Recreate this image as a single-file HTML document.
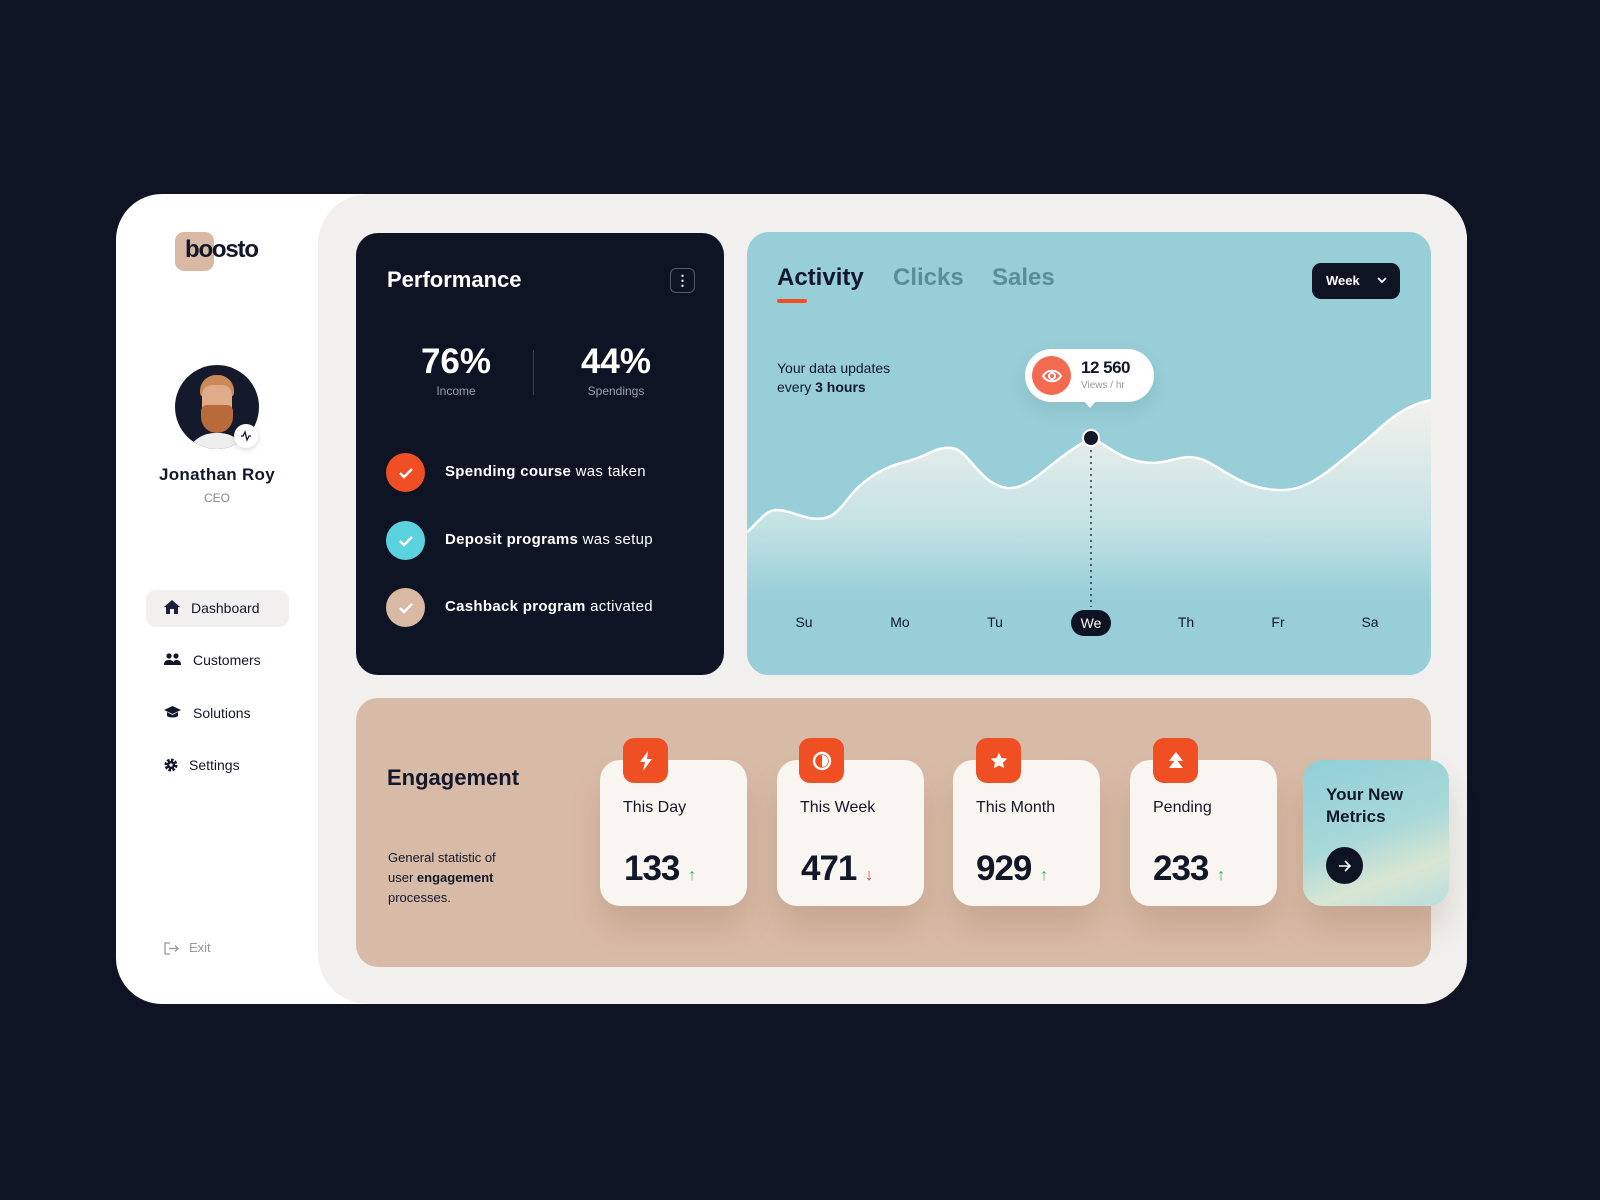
<!DOCTYPE html>
<html><head><meta charset="utf-8"><style>
*{box-sizing:border-box;margin:0;padding:0}
body{width:1600px;height:1200px;background:#0f1424;font-family:"Liberation Sans",sans-serif;position:relative;overflow:hidden;color:#12172a}
.abs{position:absolute}
.outer{left:116px;top:194px;width:1351px;height:810px;background:#fff;border-radius:46px;overflow:hidden}
.content{left:202px;top:0;width:1149px;height:810px;background:#f1f0ee;border-radius:50px 0 0 50px}
.perf{left:356px;top:233px;width:368px;height:442px;background:#0f1424;border-radius:22px;color:#fff}
.act{left:747px;top:232px;width:684px;height:443px;background:#97ced8;border-radius:22px;overflow:hidden}
.eng{left:356px;top:698px;width:1075px;height:269px;background:#d8bba7;border-radius:22px}
.mini{width:147px;height:146px;background:#f9f5f0;border-radius:20px;top:760px;box-shadow:0 22px 30px rgba(120,80,50,.18)}
.ico{width:45px;height:45px;background:#f04e23;border-radius:11px;top:738px;display:flex;align-items:center;justify-content:center}
.lbl{font-size:16px;color:#12172a}
.num{font-size:35px;font-weight:bold;letter-spacing:-1px}
.nav{font-size:14px;color:#12172a;left:191px}
.chk{width:39px;height:39px;border-radius:50%;display:flex;align-items:center;justify-content:center}
.ct{font-size:15px;color:#fff;left:445px;letter-spacing:.3px}
.day{font-size:14px;top:614px;width:40px;text-align:center;color:#12172a}
</style></head><body>
<div class="abs outer"><div class="abs content"></div></div>

<!-- sidebar -->
<div class="abs" style="left:175px;top:232px;width:39px;height:39px;background:#d9b9a3;border-radius:9px"></div>
<div class="abs" style="left:185px;top:236px;font-size:24px;font-weight:bold;letter-spacing:-1.2px;color:#12172a">boosto</div>
<div class="abs" style="left:175px;top:365px;width:84px;height:84px;border-radius:50%;background:#141a2c;overflow:hidden">
 <div class="abs" style="left:25px;top:10px;width:34px;height:22px;background:#c98a55;border-radius:16px 16px 4px 4px"></div>
 <div class="abs" style="left:27px;top:20px;width:30px;height:36px;background:#e0ab8a;border-radius:10px"></div>
 <div class="abs" style="left:26px;top:40px;width:32px;height:28px;background:#b86a3a;border-radius:6px 6px 16px 16px"></div>
 <div class="abs" style="left:10px;top:68px;width:64px;height:30px;background:#eee;border-radius:30px 30px 0 0"></div>
</div>
<div class="abs" style="left:234px;top:424px;width:24px;height:24px;background:#fff;border-radius:50%;box-shadow:0 2px 6px rgba(0,0,0,.15);display:flex;align-items:center;justify-content:center">
<svg width="12" height="12" viewBox="0 0 12 12"><path d="M1 6h2l2-4 2 8 2-4h2" fill="none" stroke="#12172a" stroke-width="1.3"/></svg></div>
<div class="abs" style="left:117px;top:465px;width:200px;text-align:center;font-size:17px;font-weight:bold;letter-spacing:.3px">Jonathan Roy</div>
<div class="abs" style="left:117px;top:491px;width:200px;text-align:center;font-size:12px;color:#888">CEO</div>

<div class="abs" style="left:146px;top:590px;width:143px;height:37px;background:#f1f0ee;border-radius:10px"></div>
<svg class="abs" style="left:164px;top:600px" width="16" height="14" viewBox="0 0 16 14"><path d="M8 0L0 7h2v7h4V9h4v5h4V7h2z" fill="#1a1f3d"/></svg>
<div class="abs nav" style="top:600px">Dashboard</div>
<svg class="abs" style="left:164px;top:653px" width="17" height="12" viewBox="0 0 17 12"><circle cx="5" cy="3" r="2.6" fill="#12172a"/><circle cx="12" cy="3" r="2.6" fill="#12172a"/><path d="M0 12c0-4 2-5 5-5s5 1 5 5zM9 12c0-3 1-5 3-5 3 0 5 1 5 5z" fill="#12172a"/></svg>
<div class="abs nav" style="top:652px;left:193px">Customers</div>
<svg class="abs" style="left:164px;top:706px" width="17" height="12" viewBox="0 0 17 12"><path d="M0 4L8.5 0 17 4 8.5 8z M3 6v4c2 2 9 2 11 0V6L8.5 9z" fill="#12172a"/></svg>
<div class="abs nav" style="top:705px;left:193px">Solutions</div>
<svg class="abs" style="left:164px;top:758px" width="14" height="14" viewBox="0 0 14 14"><circle cx="7" cy="7" r="5" fill="none" stroke="#12172a" stroke-width="3" stroke-dasharray="2.5 1.4"/><circle cx="7" cy="7" r="4" fill="#12172a"/><circle cx="7" cy="7" r="1.6" fill="#fff"/></svg>
<div class="abs nav" style="top:757px;left:189px">Settings</div>
<svg class="abs" style="left:164px;top:942px" width="15" height="13" viewBox="0 0 15 13"><path d="M6 1H1v11h5M5 6.5h9M11 3.5l3 3-3 3" fill="none" stroke="#999" stroke-width="1.3"/></svg>
<div class="abs" style="left:189px;top:940px;font-size:13px;color:#999">Exit</div>

<!-- performance -->
<div class="abs perf"></div>
<div class="abs" style="left:387px;top:267px;font-size:22px;font-weight:bold;color:#fff">Performance</div>
<div class="abs" style="left:670px;top:268px;width:25px;height:25px;border:1px solid #555b6b;border-radius:6px;color:#fff;text-align:center;font-size:14px;line-height:22px;font-weight:bold">⋮</div>
<div class="abs" style="left:396px;top:342px;width:120px;text-align:center;font-size:35px;font-weight:bold;color:#fff">76%</div>
<div class="abs" style="left:396px;top:384px;width:120px;text-align:center;font-size:12px;color:#9aa0ad">Income</div>
<div class="abs" style="left:533px;top:350px;width:1px;height:45px;background:#3a4050"></div>
<div class="abs" style="left:556px;top:342px;width:120px;text-align:center;font-size:35px;font-weight:bold;color:#fff">44%</div>
<div class="abs" style="left:556px;top:384px;width:120px;text-align:center;font-size:12px;color:#9aa0ad">Spendings</div>
<div class="abs chk" style="left:386px;top:453px;background:#f04e23"><svg width="16" height="12"><path d="M2 6l4 4 8-8" fill="none" stroke="#fff" stroke-width="2.4"/></svg></div>
<div class="abs chk" style="left:386px;top:521px;background:#5bd3df"><svg width="16" height="12"><path d="M2 6l4 4 8-8" fill="none" stroke="#fff" stroke-width="2.4"/></svg></div>
<div class="abs chk" style="left:386px;top:588px;background:#d9b9a3"><svg width="16" height="12"><path d="M2 6l4 4 8-8" fill="none" stroke="#fff" stroke-width="2.4"/></svg></div>
<div class="abs ct" style="top:463px"><b>Spending course</b> was taken</div>
<div class="abs ct" style="top:531px"><b>Deposit programs</b> was setup</div>
<div class="abs ct" style="top:598px"><b>Cashback program</b> activated</div>

<!-- activity -->
<div class="abs act">
<svg class="abs" style="left:0;top:0" width="684" height="443">
<defs><linearGradient id="g" x1="0" y1="0" x2="0" y2="1"><stop offset="0" stop-color="#f4f1ec"/><stop offset=".45" stop-color="#c4e2e4"/><stop offset=".72" stop-color="#97ced8"/></linearGradient></defs>
<path d="M0,300 C12,290 18,278 30,278 C45,278 60,290 78,286 C95,282 100,262 120,248 C135,236 150,232 165,228 C180,224 190,214 205,216 C222,218 232,252 260,256 C285,258 300,230 344,206 C360,212 370,226 395,230 C420,234 430,222 450,226 C470,230 490,256 530,258 C560,260 580,240 610,216 C635,196 650,175 684,168 L684,443 L0,443 Z" fill="url(#g)"/>
<path d="M0,300 C12,290 18,278 30,278 C45,278 60,290 78,286 C95,282 100,262 120,248 C135,236 150,232 165,228 C180,224 190,214 205,216 C222,218 232,252 260,256 C285,258 300,230 344,206 C360,212 370,226 395,230 C420,234 430,222 450,226 C470,230 490,256 530,258 C560,260 580,240 610,216 C635,196 650,175 684,168" fill="none" stroke="#fff" stroke-width="2.5"/>
<line x1="344" y1="206" x2="344" y2="375" stroke="#12172a" stroke-width="1.3" stroke-dasharray="2 4"/>
<circle cx="344" cy="206" r="8" fill="#12172a" stroke="#fff" stroke-width="2"/>
</svg>
</div>
<div class="abs" style="left:777px;top:264px;font-size:24px;font-weight:bold;color:#12172a">Activity</div>
<div class="abs" style="left:893px;top:264px;font-size:24px;font-weight:bold;color:#5a8d98">Clicks</div>
<div class="abs" style="left:992px;top:264px;font-size:24px;font-weight:bold;color:#5a8d98">Sales</div>
<div class="abs" style="left:777px;top:299px;width:30px;height:4px;background:#f04e23;border-radius:2px"></div>
<div class="abs" style="left:1312px;top:263px;width:88px;height:36px;background:#0f1424;border-radius:9px;color:#fff;font-size:13px;font-weight:bold;padding:10px 0 0 14px">Week<svg class="abs" style="left:65px;top:14px" width="10" height="7"><path d="M1 1l4 4 4-4" fill="none" stroke="#fff" stroke-width="1.8"/></svg></div>
<div class="abs" style="left:777px;top:359px;font-size:14px;line-height:19px;color:#12172a">Your data updates<br>every <b>3 hours</b></div>
<div class="abs" style="left:1025px;top:349px;width:129px;height:53px;background:#fff;border-radius:27px;box-shadow:0 8px 20px rgba(0,0,0,.08)"></div>
<div class="abs" style="left:1083px;top:400px;width:0;height:0;border-left:7px solid transparent;border-right:7px solid transparent;border-top:8px solid #fff"></div>
<div class="abs" style="left:1032px;top:356px;width:39px;height:39px;background:#f26a50;border-radius:50%;display:flex;align-items:center;justify-content:center"><svg width="20" height="14" viewBox="0 0 20 14"><path d="M1 7c4-7 14-7 18 0-4 7-14 7-18 0z" fill="none" stroke="#fff" stroke-width="2"/><circle cx="10" cy="7" r="3" fill="none" stroke="#fff" stroke-width="2"/></svg></div>
<div class="abs" style="left:1081px;top:358px;font-size:17px;font-weight:bold;letter-spacing:-.5px">12 560</div>
<div class="abs" style="left:1081px;top:380px;font-size:10px;color:#999">Views / hr</div>
<div class="abs day" style="left:784px">Su</div>
<div class="abs day" style="left:880px">Mo</div>
<div class="abs day" style="left:975px">Tu</div>
<div class="abs" style="left:1071px;top:610px;width:40px;height:26px;border-radius:13px;background:#0f1424;color:#fff;font-size:14px;text-align:center;line-height:26px">We</div>
<div class="abs day" style="left:1166px">Th</div>
<div class="abs day" style="left:1258px">Fr</div>
<div class="abs day" style="left:1350px">Sa</div>

<!-- engagement -->
<div class="abs eng"></div>
<div class="abs" style="left:387px;top:765px;font-size:22px;font-weight:bold">Engagement</div>
<div class="abs" style="left:388px;top:848px;font-size:13px;line-height:20px;color:#12172a">General statistic of<br>user <b>engagement</b><br>processes.</div>

<div class="abs mini" style="left:600px"></div>
<div class="abs mini" style="left:777px"></div>
<div class="abs mini" style="left:953px"></div>
<div class="abs mini" style="left:1130px"></div>
<div class="abs" style="left:1303px;top:760px;width:146px;height:146px;border-radius:20px;background:linear-gradient(160deg,#8fcfd8 0%,#a9d8d8 50%,#d8e6d2 75%,#b9dde0 100%);box-shadow:0 22px 30px rgba(120,80,50,.18)"></div>

<div class="abs ico" style="left:623px"><svg width="14" height="20" viewBox="0 0 14 20"><path d="M9 0L1 11h5l-2 9 9-12H8z" fill="#fff"/></svg></div>
<div class="abs ico" style="left:799px"><svg width="20" height="20"><circle cx="10" cy="10" r="8" fill="none" stroke="#fff" stroke-width="2.4"/><path d="M10 4a6 6 0 0 1 0 12z" fill="#fff"/></svg></div>
<div class="abs ico" style="left:976px"><svg width="18" height="18" viewBox="0 0 24 24"><path d="M12 1l3.3 7 7.7.9-5.7 5.2 1.6 7.6L12 17.9 5.1 21.7l1.6-7.6L1 8.9 8.7 8z" fill="#fff"/></svg></div>
<div class="abs ico" style="left:1153px"><svg width="16" height="18" viewBox="0 0 16 18"><path d="M8 0l7 9H1zM8 7l7 9H1z" fill="#fff"/></svg></div>

<div class="abs lbl" style="left:623px;top:799px">This Day</div>
<div class="abs lbl" style="left:800px;top:799px">This Week</div>
<div class="abs lbl" style="left:976px;top:799px">This Month</div>
<div class="abs lbl" style="left:1153px;top:799px">Pending</div>
<div class="abs num" style="left:624px;top:849px">133 <span style="font-size:16px;color:#28b44a">↑</span></div>
<div class="abs num" style="left:801px;top:849px">471 <span style="font-size:16px;color:#e03a3a">↓</span></div>
<div class="abs num" style="left:976px;top:849px">929 <span style="font-size:16px;color:#28b44a">↑</span></div>
<div class="abs num" style="left:1153px;top:849px">233 <span style="font-size:16px;color:#28b44a">↑</span></div>
<div class="abs" style="left:1326px;top:784px;font-size:17px;font-weight:bold;line-height:22px">Your New<br>Metrics</div>
<div class="abs" style="left:1326px;top:847px;width:37px;height:37px;border-radius:50%;background:#0f1424;display:flex;align-items:center;justify-content:center"><svg width="14" height="12"><path d="M1 6h11M7 1l5 5-5 5" fill="none" stroke="#fff" stroke-width="1.6"/></svg></div>
</body></html>
